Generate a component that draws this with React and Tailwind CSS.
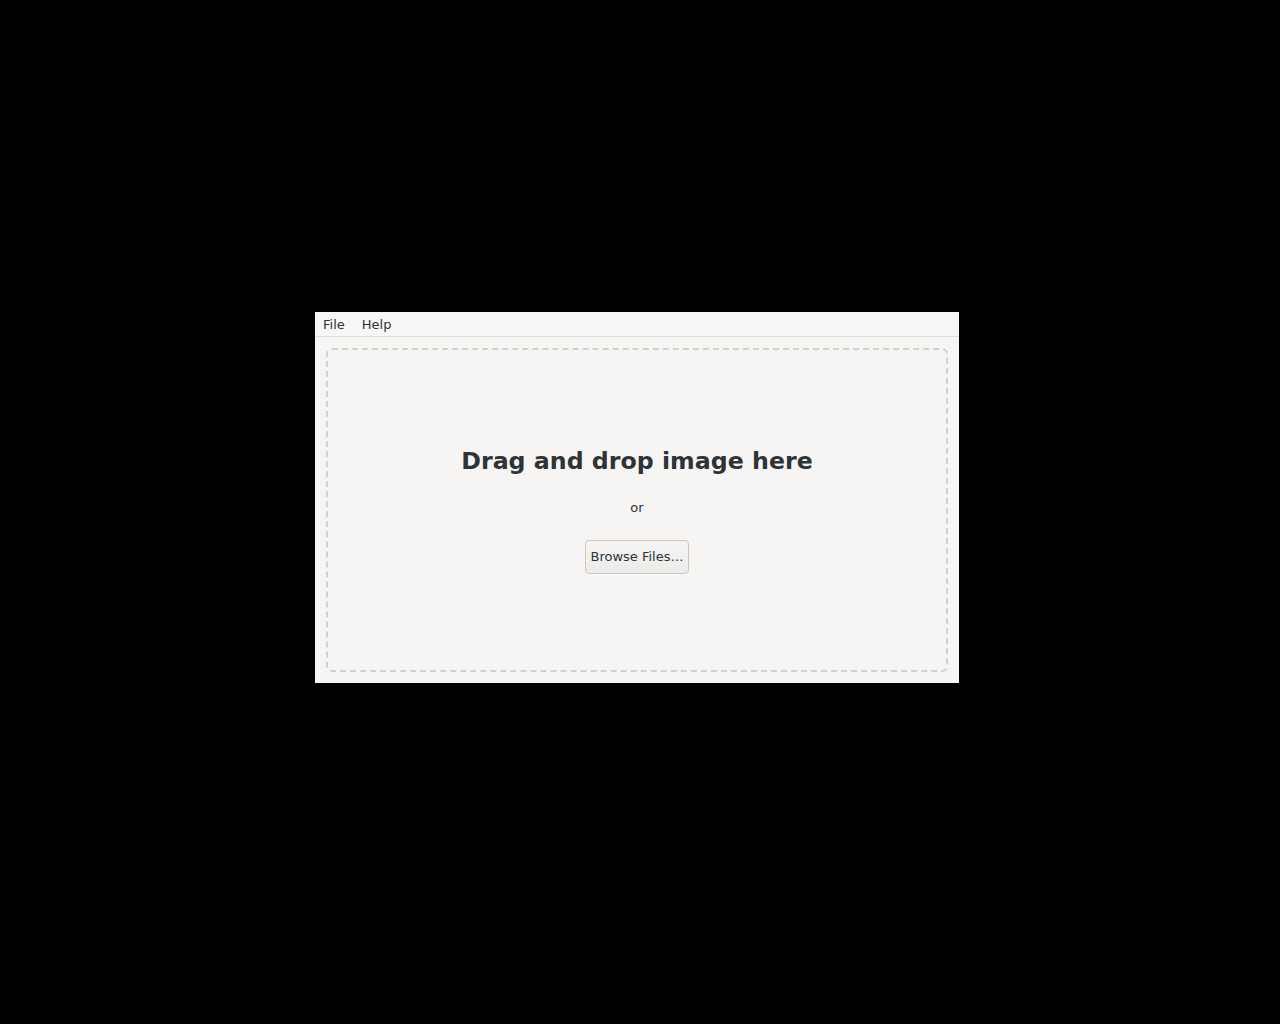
import React from "react";

/* drop-zone window: menu bar + dashed drop area */
const App = () => {
  return (
    <div
      className="w-full h-[1024px] bg-black pt-[312px] pl-[315px]"
      style={{ fontFamily: '"DejaVu Sans", sans-serif' }}
    >
      <div className="w-[644px] h-[371px] bg-[#f6f5f4] flex flex-col text-[#2e3436]">
        {/* menu bar */}
        <div className="h-[25px] flex items-center gap-[17px] px-2 pt-[1px] text-[13px] border-b border-[#e0dedb] bg-[#f8f7f6]">
          <span>File</span>
          <span>Help</span>
        </div>

        {/* drop area */}
        <div className="flex-1 p-[11px]">
          <div className="h-full pt-[4px] border-2 border-dashed border-[#d2d0cd] rounded-md flex flex-col items-center justify-center">
            <div className="text-[23.7px] font-bold leading-none">Drag and drop image here</div>
            <div className="mt-[24px] text-[13px]">or</div>
            <button className="mt-[23px] h-[34px] px-[4px] w-[104px] text-[13px] border border-[#cdc7c2] rounded-[4px] bg-gradient-to-b from-[#f6f5f4] to-[#edebe9] text-[#2e3436]">
              Browse Files…
            </button>
          </div>
        </div>
      </div>
    </div>
  );
};

export default App;
